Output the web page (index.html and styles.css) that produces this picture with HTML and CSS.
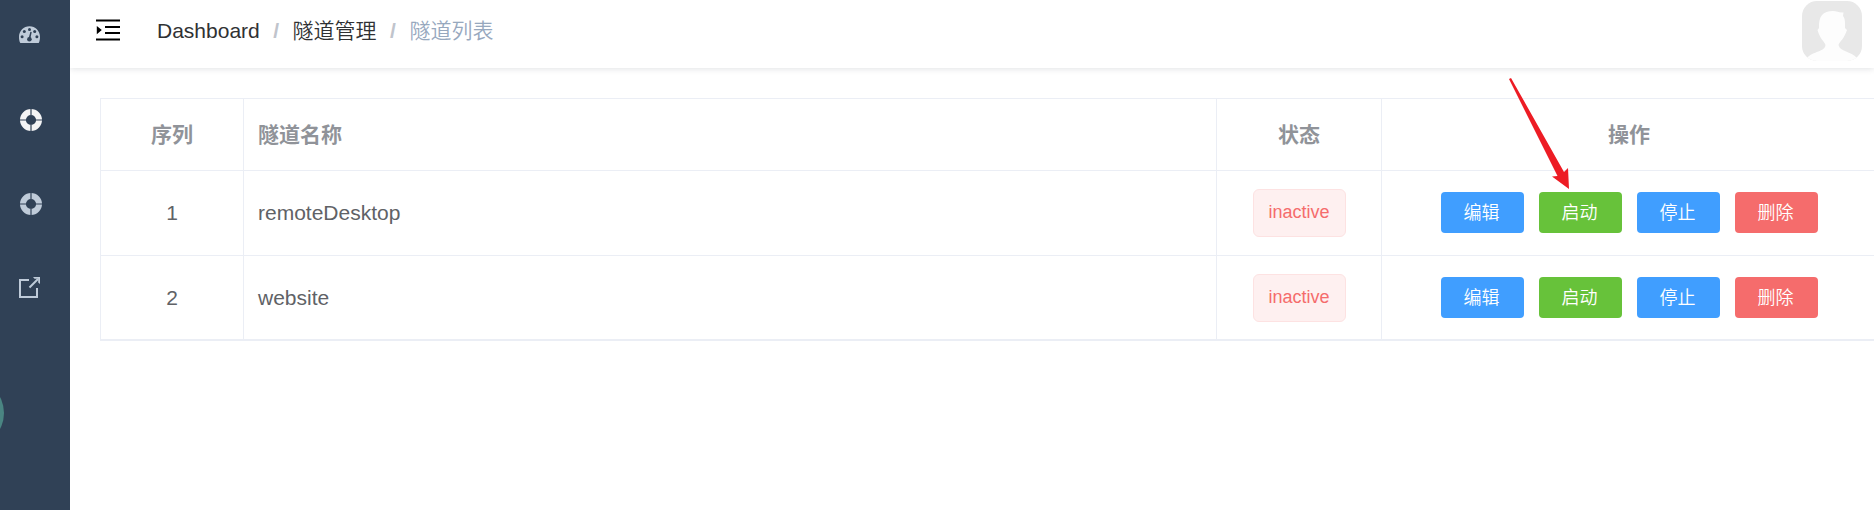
FILE: index.html
```html
<!DOCTYPE html>
<html lang="zh-CN">
<head>
<meta charset="utf-8">
<title>隧道列表</title>
<link rel="stylesheet" href="styles.css">
</head>
<body>
<div class="app">
  <nav class="sidebar">
    <a class="nav-item"><svg class="gauge" width="22" height="18" viewBox="0 0 22 18"><path fill="currentColor" d="M10.5 .2C4.700.2 0 4.900 0 10.700c0 2.300.3 4.500 1.300 6.300h18.400c1-1.800 1.300-4 1.300-6.300C21 4.900 16.300.2 10.500.2z"/><g fill="#304156"><circle cx="10.500" cy="3.400" r="1.500"/><circle cx="5.300" cy="5.500" r="1.500"/><circle cx="15.700" cy="5.500" r="1.500"/><circle cx="3.100" cy="10.700" r="1.500"/><circle cx="17.900" cy="10.700" r="1.500"/><circle cx="10.400" cy="13.200" r="2.300"/><path d="M9.700 12 11.400 5.800l1.300.3-1.300 6.400z"/></g></svg></a>
    <a class="nav-item active"><svg class="ring" width="22" height="22" viewBox="0 0 22 22"><circle cx="11" cy="11" r="8.050" fill="none" stroke="currentColor" stroke-width="5.900"/><path stroke="#304156" stroke-width="1.200" d="M11 0v6M11 16v6M0 11h6M16 11h6"/></svg></a>
    <a class="nav-item"><svg class="ring" width="22" height="22" viewBox="0 0 22 22"><circle cx="11" cy="11" r="8.050" fill="none" stroke="currentColor" stroke-width="5.900"/><path stroke="#304156" stroke-width="1.200" d="M11 0v6M11 16v6M0 11h6M16 11h6"/></svg></a>
    <a class="nav-item"><svg class="external" width="22" height="22" viewBox="0 0 22 22"><g fill="none" stroke="currentColor" stroke-width="2"><path d="M10 3H1v17h17v-9"/><path d="M10.500 10.500 19 2"/></g><path fill="currentColor" d="M14 0h7v7l-1.800-1.500V1.800h-3.700z"/></svg></a>
    <span class="bubble"></span>
  </nav>
  <div class="main">
    <header class="navbar">
      <svg class="toggle" width="24" height="22" viewBox="0 0 24 22"><path fill="#000" d="M0 .5h24v2H0zM9 7h15v2H9zM9 13h15v2H9zM0 19.500h24v2H0zM.8 7v8.200L5.800 11z"/></svg>
      <div class="breadcrumb"><span>Dashboard</span><i>/</i><span>隧道管理</span><i>/</i><span class="current">隧道列表</span></div>
      <svg class="avatar" width="60" height="60" viewBox="0 0 60 60"><rect width="60" height="60" fill="#e8e8e8"/><path fill="#fdfdfd" d="M5 57C11 50 23 51 23.500 44 22 40 18 38 15.500 29L17 27C16.500 15 21 10 31 10 35 10 37 12 41.500 11.500L41 15C43.500 18 43 23 43 27L45 29C42 38 38 40 36.500 44 38 51 49 50 55 57L50 60H10z"/></svg>
    </header>
    <main class="content">
      <table class="tunnels">
        <colgroup><col class="c-index"><col class="c-name"><col class="c-state"><col class="c-ops"></colgroup>
        <thead><tr><th>序列</th><th class="name">隧道名称</th><th>状态</th><th>操作</th></tr></thead>
        <tbody>
          <tr><td>1</td><td class="name">remoteDesktop</td><td class="state"><span class="tag">inactive</span></td><td class="actions"><div class="ops"><button>编辑</button><button class="success">启动</button><button>停止</button><button class="danger">删除</button></div></td></tr>
          <tr><td>2</td><td class="name">website</td><td class="state"><span class="tag">inactive</span></td><td class="actions"><div class="ops"><button>编辑</button><button class="success">启动</button><button>停止</button><button class="danger">删除</button></div></td></tr>
        </tbody>
      </table>
    </main>
  </div>
  <svg class="pointer" width="62" height="113" viewBox="0 0 62 113"><path fill="#ed1c24" d="M0 1 2 0 55 94 59 90 60 111 43 98.500 48.500 98z"/></svg>
</div>
</body>
</html>
```
FILE: styles.css
```css
* { box-sizing: border-box; }
body {
  margin: 0;
  background: #fff;
  color: #606266;
  font: 350 21px/30px "Liberation Sans", "Noto Sans CJK SC", sans-serif;
  overflow: hidden;
}
.app { position: relative; display: flex; width: 1874px; height: 510px; overflow: hidden; }
.sidebar { position: relative; flex: 0 0 70px; background: #304156; overflow: hidden; }
.nav-item { display: flex; align-items: center; height: 84px; padding-left: 19px; color: #bfcbd9; }
.nav-item:first-child { height: 78px; padding-bottom: 8px; }
.nav-item.active { color: #f4f4f5; }
.nav-item .ring { margin-left: 1px; }
.nav-item svg { display: block; }
.bubble { position: absolute; left: -64px; top: 379px; width: 68px; height: 68px; border-radius: 50%; background: #4a8582; }
.main { flex: 0 0 1808px; display: flex; flex-direction: column; }
.navbar {
  display: flex;
  align-items: flex-start;
  height: 68px;
  padding: 0 16px 0 26px;
  width: 1804px;
  box-shadow: 0 1px 6px rgba(0, 21, 41, .12);
}
.toggle { margin-top: 19px; }
.breadcrumb { display: flex; margin: 16px 0 0 37px; color: #303133; white-space: nowrap; }
.breadcrumb i { margin: 0 13.500px; font-style: normal; font-weight: bold; color: #c0c4cc; }
.breadcrumb .current { color: #97a8be; }
.avatar { margin: 1px -4px 0 auto; border-radius: 15px; }
.content { padding: 30px 0 0 30px; }
.tunnels {
  width: 1777px;
  table-layout: fixed;
  border-collapse: separate;
  border-spacing: 0;
  border: 1px solid #ebeef5;
  border-right: 0;
}
.c-index { width: 143px; }
.c-name { width: 973px; }
.c-state { width: 165px; }
th, td {
  height: 85px;
  padding: 27px 0 0;
  text-align: center;
  vertical-align: top;
  border-right: 1px solid #ebeef5;
  border-bottom: 1px solid #ebeef5;
}
th { height: 72px; padding-top: 21px; color: #909399; font-weight: bold; }
tbody tr:last-child td { height: 84px; }
td.state { padding-top: 18px; }
td.actions { padding-top: 21px; }
.name { padding-left: 14px; text-align: left; }
.tag {
  display: block;
  width: 93px;
  height: 48px;
  margin: 0 auto;
  border: 1px solid #fde2e2;
  border-radius: 6px;
  background: #fef0f0;
  color: #f56c6c;
  font-size: 18px;
  line-height: 45px;
}
.ops { display: flex; justify-content: center; gap: 15px; }
button {
  width: 83px;
  height: 41px;
  padding: 2px 1px 0 0;
  border: 0;
  border-radius: 4px;
  background: #409eff;
  color: #fff;
  font: 350 18px/39px "Liberation Sans", "Noto Sans CJK SC", sans-serif;
}
.success { background: #67c23a; }
.danger { background: #f56c6c; }
.pointer { position: absolute; left: 1509px; top: 78px; }
```
